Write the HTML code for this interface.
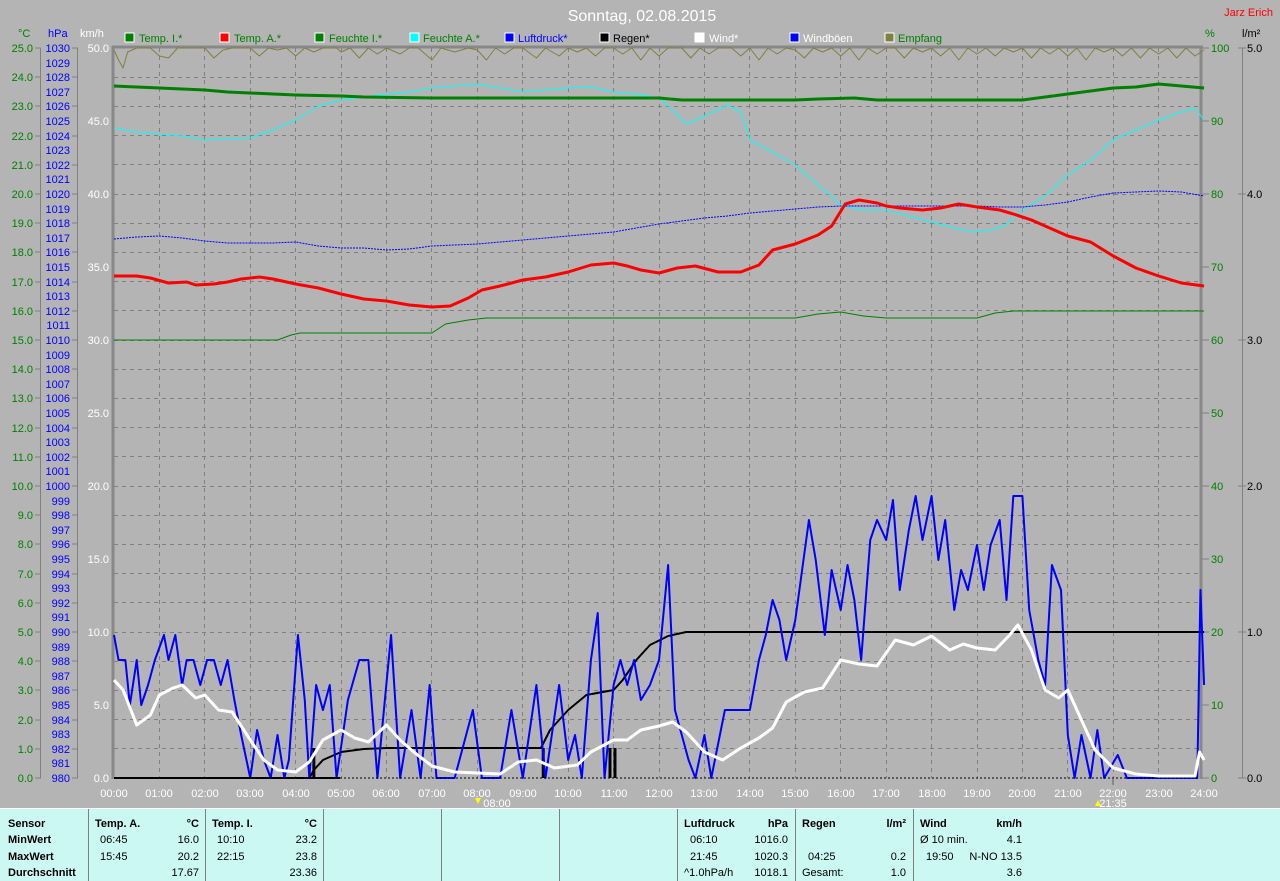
<!DOCTYPE html>
<html><head><meta charset="utf-8"><style>
html,body{margin:0;padding:0;background:#b4b4b4;}
svg{display:block;font-family:"Liberation Sans",sans-serif;}
</style></head><body>
<svg width="1280" height="881" xmlns="http://www.w3.org/2000/svg">
<rect width="1280" height="881" fill="#b4b4b4"/>
<text x="642" y="21" fill="#fff" font-size="16" text-anchor="middle">Sonntag, 02.08.2015</text>
<text x="1273" y="16" fill="#f00" font-size="11" text-anchor="end">Jarz Erich</text>
<g font-size="11">
<text x="18" y="37" fill="#008000">°C</text>
<text x="48" y="37" fill="#00f">hPa</text>
<text x="80" y="37" fill="#fff">km/h</text>
<text x="1205" y="37" fill="#008000">%</text>
<text x="1242" y="37" fill="#000">l/m²</text>
</g>
<g font-size="11">
<rect x="125" y="33" width="9" height="9" fill="#008000" stroke="#fff"/><text x="139" y="42" fill="#008000">Temp. I.*</text>
<rect x="220" y="33" width="9" height="9" fill="#f00" stroke="#fff"/><text x="234" y="42" fill="#008000">Temp. A.*</text>
<rect x="315" y="33" width="9" height="9" fill="#008000" stroke="#fff"/><text x="329" y="42" fill="#008000">Feuchte I.*</text>
<rect x="410" y="33" width="9" height="9" fill="#0ff" stroke="#fff"/><text x="423" y="42" fill="#008000">Feuchte A.*</text>
<rect x="505" y="33" width="9" height="9" fill="#00f" stroke="#fff"/><text x="518" y="42" fill="#00f">Luftdruck*</text>
<rect x="600" y="33" width="9" height="9" fill="#000" stroke="#fff"/><text x="613" y="42" fill="#000">Regen*</text>
<rect x="695" y="33" width="9" height="9" fill="#fff" stroke="#fff"/><text x="709" y="42" fill="#fff">Wind*</text>
<rect x="790" y="33" width="9" height="9" fill="#00f" stroke="#fff"/><text x="803" y="42" fill="#fff">Windböen</text>
<rect x="885" y="33" width="9" height="9" fill="#808040" stroke="#fff"/><text x="898" y="42" fill="#008000">Empfang</text>
</g>
<g stroke="#808080" stroke-width="1">
<line x1="40.5" y1="48" x2="40.5" y2="778"/>
<line x1="77.5" y1="48" x2="77.5" y2="778"/>
<line x1="1242.5" y1="48" x2="1242.5" y2="778"/>
</g>
<g stroke="#808080" stroke-dasharray="4,4" stroke-width="1">
<line x1="114" x2="1201" y1="77.5" y2="77.5"/><line x1="114" x2="1201" y1="106.5" y2="106.5"/>
<line x1="114" x2="1201" y1="135.5" y2="135.5"/><line x1="114" x2="1201" y1="164.5" y2="164.5"/>
<line x1="114" x2="1201" y1="194.5" y2="194.5"/><line x1="114" x2="1201" y1="223.5" y2="223.5"/>
<line x1="114" x2="1201" y1="252.5" y2="252.5"/><line x1="114" x2="1201" y1="281.5" y2="281.5"/>
<line x1="114" x2="1201" y1="310.5" y2="310.5"/><line x1="114" x2="1201" y1="340.5" y2="340.5"/>
<line x1="114" x2="1201" y1="369.5" y2="369.5"/><line x1="114" x2="1201" y1="398.5" y2="398.5"/>
<line x1="114" x2="1201" y1="427.5" y2="427.5"/><line x1="114" x2="1201" y1="456.5" y2="456.5"/>
<line x1="114" x2="1201" y1="486.5" y2="486.5"/><line x1="114" x2="1201" y1="515.5" y2="515.5"/>
<line x1="114" x2="1201" y1="544.5" y2="544.5"/><line x1="114" x2="1201" y1="573.5" y2="573.5"/>
<line x1="114" x2="1201" y1="602.5" y2="602.5"/><line x1="114" x2="1201" y1="632.5" y2="632.5"/>
<line x1="114" x2="1201" y1="661.5" y2="661.5"/><line x1="114" x2="1201" y1="690.5" y2="690.5"/>
<line x1="114" x2="1201" y1="719.5" y2="719.5"/><line x1="114" x2="1201" y1="748.5" y2="748.5"/>
<line y1="48" y2="778" x1="159.5" x2="159.5"/><line y1="48" y2="778" x1="204.5" x2="204.5"/>
<line y1="48" y2="778" x1="250.5" x2="250.5"/><line y1="48" y2="778" x1="295.5" x2="295.5"/>
<line y1="48" y2="778" x1="341.5" x2="341.5"/><line y1="48" y2="778" x1="386.5" x2="386.5"/>
<line y1="48" y2="778" x1="431.5" x2="431.5"/><line y1="48" y2="778" x1="477.5" x2="477.5"/>
<line y1="48" y2="778" x1="522.5" x2="522.5"/><line y1="48" y2="778" x1="568.5" x2="568.5"/>
<line y1="48" y2="778" x1="613.5" x2="613.5"/><line y1="48" y2="778" x1="659.5" x2="659.5"/>
<line y1="48" y2="778" x1="704.5" x2="704.5"/><line y1="48" y2="778" x1="749.5" x2="749.5"/>
<line y1="48" y2="778" x1="795.5" x2="795.5"/><line y1="48" y2="778" x1="840.5" x2="840.5"/>
<line y1="48" y2="778" x1="886.5" x2="886.5"/><line y1="48" y2="778" x1="931.5" x2="931.5"/>
<line y1="48" y2="778" x1="977.5" x2="977.5"/><line y1="48" y2="778" x1="1022.5" x2="1022.5"/>
<line y1="48" y2="778" x1="1067.5" x2="1067.5"/><line y1="48" y2="778" x1="1113.5" x2="1113.5"/>
<line y1="48" y2="778" x1="1158.5" x2="1158.5"/>
</g>
<g stroke="#888">
<line x1="112" y1="47" x2="1203" y2="47" stroke-width="3"/>
<line x1="113" y1="46" x2="113" y2="779" stroke-width="3"/>
<line x1="1201" y1="46" x2="1201" y2="779" stroke-width="3"/>
<line x1="1113" y1="779" x2="1113" y2="785" stroke-width="2"/>
</g>
<g font-size="11" fill="#008000" text-anchor="end">
<text x="33" y="52">25.0</text><text x="33" y="81">24.0</text><text x="33" y="110">23.0</text><text x="33" y="140">22.0</text><text x="33" y="169">21.0</text><text x="33" y="198">20.0</text><text x="33" y="227">19.0</text><text x="33" y="256">18.0</text><text x="33" y="286">17.0</text><text x="33" y="315">16.0</text><text x="33" y="344">15.0</text><text x="33" y="373">14.0</text><text x="33" y="402">13.0</text><text x="33" y="432">12.0</text><text x="33" y="461">11.0</text><text x="33" y="490">10.0</text><text x="33" y="519">9.0</text><text x="33" y="548">8.0</text><text x="33" y="578">7.0</text><text x="33" y="607">6.0</text><text x="33" y="636">5.0</text><text x="33" y="665">4.0</text><text x="33" y="694">3.0</text><text x="33" y="724">2.0</text><text x="33" y="753">1.0</text><text x="33" y="782">0.0</text>
</g>
<g font-size="11" fill="#00f" text-anchor="end">
<text x="70" y="52">1030</text><text x="70" y="67">1029</text><text x="70" y="81">1028</text><text x="70" y="96">1027</text><text x="70" y="110">1026</text><text x="70" y="125">1025</text><text x="70" y="140">1024</text><text x="70" y="154">1023</text><text x="70" y="169">1022</text><text x="70" y="183">1021</text><text x="70" y="198">1020</text><text x="70" y="213">1019</text><text x="70" y="227">1018</text><text x="70" y="242">1017</text><text x="70" y="256">1016</text><text x="70" y="271">1015</text><text x="70" y="286">1014</text><text x="70" y="300">1013</text><text x="70" y="315">1012</text><text x="70" y="329">1011</text><text x="70" y="344">1010</text><text x="70" y="359">1009</text><text x="70" y="373">1008</text><text x="70" y="388">1007</text><text x="70" y="402">1006</text><text x="70" y="417">1005</text><text x="70" y="432">1004</text><text x="70" y="446">1003</text><text x="70" y="461">1002</text><text x="70" y="475">1001</text><text x="70" y="490">1000</text><text x="70" y="505">999</text><text x="70" y="519">998</text><text x="70" y="534">997</text><text x="70" y="548">996</text><text x="70" y="563">995</text><text x="70" y="578">994</text><text x="70" y="592">993</text><text x="70" y="607">992</text><text x="70" y="621">991</text><text x="70" y="636">990</text><text x="70" y="651">989</text><text x="70" y="665">988</text><text x="70" y="680">987</text><text x="70" y="694">986</text><text x="70" y="709">985</text><text x="70" y="724">984</text><text x="70" y="738">983</text><text x="70" y="753">982</text><text x="70" y="767">981</text><text x="70" y="782">980</text>
</g>
<g font-size="11" fill="#fff" text-anchor="end">
<text x="109" y="52">50.0</text><text x="109" y="125">45.0</text><text x="109" y="198">40.0</text><text x="109" y="271">35.0</text><text x="109" y="344">30.0</text><text x="109" y="417">25.0</text><text x="109" y="490">20.0</text><text x="109" y="563">15.0</text><text x="109" y="636">10.0</text><text x="109" y="709">5.0</text><text x="109" y="782">0.0</text>
</g>
<g font-size="11" fill="#008000">
<text x="1211" y="52">100</text><text x="1211" y="125">90</text><text x="1211" y="198">80</text><text x="1211" y="271">70</text><text x="1211" y="344">60</text><text x="1211" y="417">50</text><text x="1211" y="490">40</text><text x="1211" y="563">30</text><text x="1211" y="636">20</text><text x="1211" y="709">10</text><text x="1211" y="782">0</text>
</g>
<g font-size="11" fill="#000">
<text x="1247" y="52">5.0</text><text x="1247" y="198">4.0</text><text x="1247" y="344">3.0</text><text x="1247" y="490">2.0</text><text x="1247" y="636">1.0</text><text x="1247" y="782">0.0</text>
</g>
<g stroke="#808080">
<path d="M35 48h6M35 77h6M35 106h6M35 136h6M35 165h6M35 194h6M35 223h6M35 252h6M35 282h6M35 311h6M35 340h6M35 369h6M35 398h6M35 428h6M35 457h6M35 486h6M35 515h6M35 544h6M35 574h6M35 603h6M35 632h6M35 661h6M35 690h6M35 720h6M35 749h6M35 778h6"/>
<path d="M72 48h6M72 77h6M72 106h6M72 136h6M72 165h6M72 194h6M72 223h6M72 252h6M72 282h6M72 311h6M72 340h6M72 369h6M72 398h6M72 428h6M72 457h6M72 486h6M72 515h6M72 544h6M72 574h6M72 603h6M72 632h6M72 661h6M72 690h6M72 720h6M72 749h6M72 778h6"/>
<path d="M1202 48h7M1202 121h7M1202 194h7M1202 267h7M1202 340h7M1202 413h7M1202 486h7M1202 559h7M1202 632h7M1202 705h7M1202 778h7"/>
<path d="M1238 48h8M1238 194h8M1238 340h8M1238 486h8M1238 632h8M1238 778h8"/>
</g>
<g font-size="11" fill="#fff" text-anchor="middle">
<text x="114" y="797">00:00</text><text x="159" y="797">01:00</text><text x="205" y="797">02:00</text><text x="250" y="797">03:00</text><text x="296" y="797">04:00</text><text x="341" y="797">05:00</text><text x="386" y="797">06:00</text><text x="432" y="797">07:00</text><text x="477" y="797">08:00</text><text x="523" y="797">09:00</text><text x="568" y="797">10:00</text><text x="614" y="797">11:00</text><text x="659" y="797">12:00</text><text x="704" y="797">13:00</text><text x="750" y="797">14:00</text><text x="795" y="797">15:00</text><text x="841" y="797">16:00</text><text x="886" y="797">17:00</text><text x="932" y="797">18:00</text><text x="977" y="797">19:00</text><text x="1022" y="797">20:00</text><text x="1068" y="797">21:00</text><text x="1113" y="797">22:00</text><text x="1159" y="797">23:00</text><text x="1204" y="797">24:00</text>
<text x="497" y="807">08:00</text><text x="1113" y="807">21:35</text>
</g>
<path d="M475 798l3 6l3-6z" fill="#ff0"/>
<path d="M1095 806l3-6l3 6z" fill="#ff0"/>
<g transform="translate(114,0) scale(45.42,1)" fill="none" stroke-linejoin="round">
<polyline vector-effect="non-scaling-stroke" stroke="#808040" stroke-width="1" points="0,50 0.1,60 0.2,68 0.3,52 0.5,48 0.8,48 1,56 1.2,58 1.4,48 1.7,48 2,48 2.2,58 2.4,50 2.6,48 3,48 3.2,56 3.4,48 3.6,50 3.8,48 4,56 4.2,48 4.4,52 4.6,48 4.9,48 5,52 5.2,48 5.4,58 5.6,48 5.8,54 6,48 6.3,54 6.5,48 6.7,48 7,60 7.2,48 7.5,52 7.8,48 8,50 8.2,60 8.4,48 8.6,54 8.8,48 9,48 9.3,58 9.5,48 9.8,56 10,48 10.2,52 10.4,48 10.6,56 10.8,48 11,48 11.2,54 11.4,48 11.6,60 11.8,48 12,56 12.2,48 12.5,48 12.7,58 12.9,48 13.1,54 13.3,48 13.6,48 13.8,56 14,48 14.2,60 14.4,48 14.6,54 14.8,48 15,50 15.2,58 15.4,48 15.6,52 15.8,48 16,56 16.2,48 16.4,60 16.6,48 16.8,54 17,48 17.2,48 17.4,58 17.6,48 17.8,52 18,48 18.2,56 18.4,48 18.6,60 18.8,48 19,54 19.2,48 19.4,56 19.6,48 19.8,52 20,48 20.2,58 20.4,48 20.6,54 20.8,48 21,56 21.2,48 21.4,60 21.6,48 21.8,52 22,48 22.2,56 22.4,48 22.6,58 22.8,48 23,54 23.2,48 23.4,58 23.6,48 23.8,56 24,50"/>
<polyline vector-effect="non-scaling-stroke" stroke="#0ff" stroke-width="1" points="0,128 0.5,132 1,134 1.5,136 2,140 2.5,139 3,138 3.5,130 4,120 4.5,106 5,100 5.5,97 6,94 6.5,92 7,88 7.5,86 8,84 8.5,88 9,92 9.5,90 10,88 10.5,87 11,92 11.5,94 12,98 12.3,110 12.6,124 13,116 13.5,105 13.8,112 14,140 14.5,152 15,165 15.5,185 16,205 16.5,210 17,210 17.5,216 18,222 18.5,228 18.9,232 19.3,230 19.6,226 20,210 20.5,196 21,175 21.5,160 22,140 22.5,130 23,120 23.5,112 23.8,108 24,120"/>
<polyline vector-effect="non-scaling-stroke" stroke="#00f" stroke-width="1" stroke-dasharray="2,1" points="0,239 0.5,237 1,236 1.5,238 2,241 2.5,243 3,243 3.5,243 4,242 4.5,246 5,248 5.5,248 6,250 6.5,249 7,246 7.5,245 8,244 8.5,242 9,240 9.5,238 10,236 10.5,234 11,232 11.5,228 12,224 12.5,221 13,218 13.5,216 14,213 14.5,211 15,209 15.5,207 16,206 16.5,206 17,206 17.5,206 18,206 18.5,206 19,206 19.5,207 20,207 20.5,205 21,202 21.5,197 22,193 22.5,192 23,191 23.5,192 24,196"/>
<polyline vector-effect="non-scaling-stroke" stroke="#008000" stroke-width="1" points="0,340 3.6,340 3.9,335 4.1,333 7,333 7.3,324 7.8,320 8.2,318 15,318 15.5,314 16,312 16.5,316 17,318 19,318 19.4,313 19.8,311 24,311"/>
<polyline vector-effect="non-scaling-stroke" stroke="#008000" stroke-width="3" points="0,86 0.5,87 1,88 2,90 2.5,92 3.5,94 4,95 5,96 5.5,97 7,98 12,98 12.5,100 15,100 15.5,99 16.3,98 16.8,100 19,100 20,100 20.5,97 21,94 22,88 22.5,87 23,84 23.5,86 24,88"/>
<polyline vector-effect="non-scaling-stroke" stroke="#f00" stroke-width="3" points="0,276 0.5,276 0.8,278 1.2,283 1.6,282 1.8,285 2.2,284 2.5,282 2.8,279 3.2,277 3.5,279 4,284 4.5,288 5,294 5.5,299 6,301 6.5,305 7,307 7.4,306 7.8,298 8.1,290 8.5,286 9,280 9.5,277 10,272 10.5,265 11,263 11.3,266 11.6,270 12,273 12.4,268 12.8,266 13.3,272 13.8,272 14.2,265 14.5,250 15,244 15.5,235 15.8,226 16.1,204 16.4,200 16.8,203 17,206 17.3,208 17.8,210 18.2,208 18.6,204 19,207 19.5,210 19.8,214 20.2,220 20.6,228 21,236 21.5,242 22,256 22.5,268 23,276 23.5,283 24,286"/>
<polyline vector-effect="non-scaling-stroke" stroke="#000" stroke-width="2" points="0,778 4.3,778 4.4,770 4.6,760 5,752 5.5,749 6,748 9.4,748 9.6,730 10,710 10.4,695 11,690 11.2,680 11.5,660 11.8,645 12.2,636 12.6,632 24,632"/>
<g stroke="#000" stroke-width="3">
<line vector-effect="non-scaling-stroke" x1="4.4" y1="748" x2="4.4" y2="778"/>
<line vector-effect="non-scaling-stroke" x1="9.45" y1="748" x2="9.45" y2="778"/>
<line vector-effect="non-scaling-stroke" x1="10.92" y1="748" x2="10.92" y2="778"/>
<line vector-effect="non-scaling-stroke" x1="11.03" y1="748" x2="11.03" y2="778"/>
</g>
<polyline vector-effect="non-scaling-stroke" stroke="#00f" stroke-width="2" points="0,635 0.1,660 0.25,660 0.35,705 0.5,660 0.6,705 0.75,685 0.9,660 1.1,635 1.2,660 1.35,635 1.5,685 1.6,660 1.75,660 1.9,685 2.05,660 2.2,660 2.35,685 2.5,660 2.65,700 2.8,735 3,778 3.15,730 3.3,760 3.45,778 3.6,735 3.75,778 3.85,760 4.05,635 4.2,700 4.3,778 4.45,685 4.6,710 4.75,685 4.9,778 5.15,700 5.4,660 5.6,660 5.8,778 6.1,635 6.3,778 6.55,710 6.75,778 6.95,685 7.1,778 7.5,778 7.9,710 8.1,778 8.5,778 8.75,710 9,778 9.3,685 9.5,778 9.8,685 10,760 10.15,735 10.3,778 10.5,660 10.65,613 10.8,778 11,685 11.15,660 11.3,685 11.45,660 11.6,700 11.8,685 12,660 12.2,565 12.35,710 12.5,735 12.65,760 12.8,778 13,735 13.15,778 13.45,710 14,710 14.2,660 14.35,635 14.5,600 14.65,620 14.8,660 15,620 15.15,570 15.3,520 15.45,560 15.65,635 15.8,570 16,610 16.15,565 16.3,600 16.45,660 16.65,540 16.8,520 17,540 17.15,500 17.3,590 17.5,530 17.65,496 17.8,540 18,496 18.15,560 18.3,520 18.5,610 18.65,570 18.8,590 19,545 19.15,590 19.3,545 19.5,520 19.65,600 19.8,496 20,496 20.15,610 20.35,660 20.5,685 20.65,565 20.85,590 21,735 21.15,778 21.3,735 21.5,778 21.65,730 21.8,778 22.1,755 22.3,778 23.85,778 23.92,590 24,685"/>
<polyline vector-effect="non-scaling-stroke" stroke="#fff" stroke-width="3" points="0,680 0.2,690 0.5,725 0.8,715 1,695 1.3,688 1.5,685 1.8,698 2,695 2.3,710 2.6,712 3,740 3.3,760 3.6,770 4,772 4.3,762 4.6,740 5,730 5.3,738 5.6,742 6,725 6.3,740 6.6,752 7,766 7.5,772 8,773 8.5,774 8.9,762 9.3,760 9.7,768 10.2,765 10.5,752 11,740 11.3,740 11.6,730 12,726 12.3,722 12.6,732 13,752 13.4,760 13.8,748 14.2,738 14.5,728 14.8,702 15.2,692 15.6,688 16,660 16.4,664 16.8,666 17.2,640 17.6,645 18,636 18.4,650 18.7,644 19,648 19.4,650 19.7,636 19.9,625 20.2,650 20.5,690 20.8,698 21,690 21.3,720 21.6,750 22,768 22.5,774 23,776 23.8,776 23.9,752 24,760"/>
</g>
<line x1="340" y1="778" x2="1198" y2="778" stroke="#000" stroke-width="1" stroke-dasharray="2,2"/>
<line x1="114" y1="778" x2="340" y2="778" stroke="#000" stroke-width="2"/>
<rect x="0" y="808" width="1280" height="73" fill="#ccf8f4"/>
<line x1="0" y1="808.5" x2="1280" y2="808.5" stroke="#fff"/>
<g stroke="#808080" stroke-width="1">
<line x1="88.5" y1="809" x2="88.5" y2="881"/><line x1="205.5" y1="809" x2="205.5" y2="881"/><line x1="323.5" y1="809" x2="323.5" y2="881"/><line x1="441.5" y1="809" x2="441.5" y2="881"/><line x1="559.5" y1="809" x2="559.5" y2="881"/><line x1="677.5" y1="809" x2="677.5" y2="881"/><line x1="795.5" y1="809" x2="795.5" y2="881"/><line x1="913.5" y1="809" x2="913.5" y2="881"/>
</g>
<g font-size="11" fill="#000">
<g font-weight="bold"><text x="8" y="827">Sensor</text><text x="8" y="843">MinWert</text><text x="8" y="860">MaxWert</text><text x="8" y="876">Durchschnitt</text>
<text x="95" y="827">Temp. A.</text><text x="212" y="827">Temp. I.</text><text x="684" y="827">Luftdruck</text><text x="802" y="827">Regen</text><text x="920" y="827">Wind</text></g>
<g font-weight="bold" text-anchor="end"><text x="199" y="827">°C</text><text x="317" y="827">°C</text><text x="788" y="827">hPa</text><text x="906" y="827">l/m²</text><text x="1022" y="827">km/h</text></g>
<text x="100" y="843">06:45</text><text x="100" y="860">15:45</text>
<text x="217" y="843">10:10</text><text x="217" y="860">22:15</text>
<text x="690" y="843">06:10</text><text x="690" y="860">21:45</text><text x="684" y="876">^1.0hPa/h</text>
<text x="808" y="860">04:25</text><text x="802" y="876">Gesamt:</text>
<text x="920" y="843">Ø 10 min.</text><text x="926" y="860">19:50</text>
<g text-anchor="end"><text x="199" y="843">16.0</text><text x="199" y="860">20.2</text><text x="199" y="876">17.67</text>
<text x="317" y="843">23.2</text><text x="317" y="860">23.8</text><text x="317" y="876">23.36</text>
<text x="788" y="843">1016.0</text><text x="788" y="860">1020.3</text><text x="788" y="876">1018.1</text>
<text x="906" y="860">0.2</text><text x="906" y="876">1.0</text>
<text x="1022" y="843">4.1</text><text x="1022" y="860">N-NO 13.5</text><text x="1022" y="876">3.6</text></g>
</g>
</svg>
</body></html>
